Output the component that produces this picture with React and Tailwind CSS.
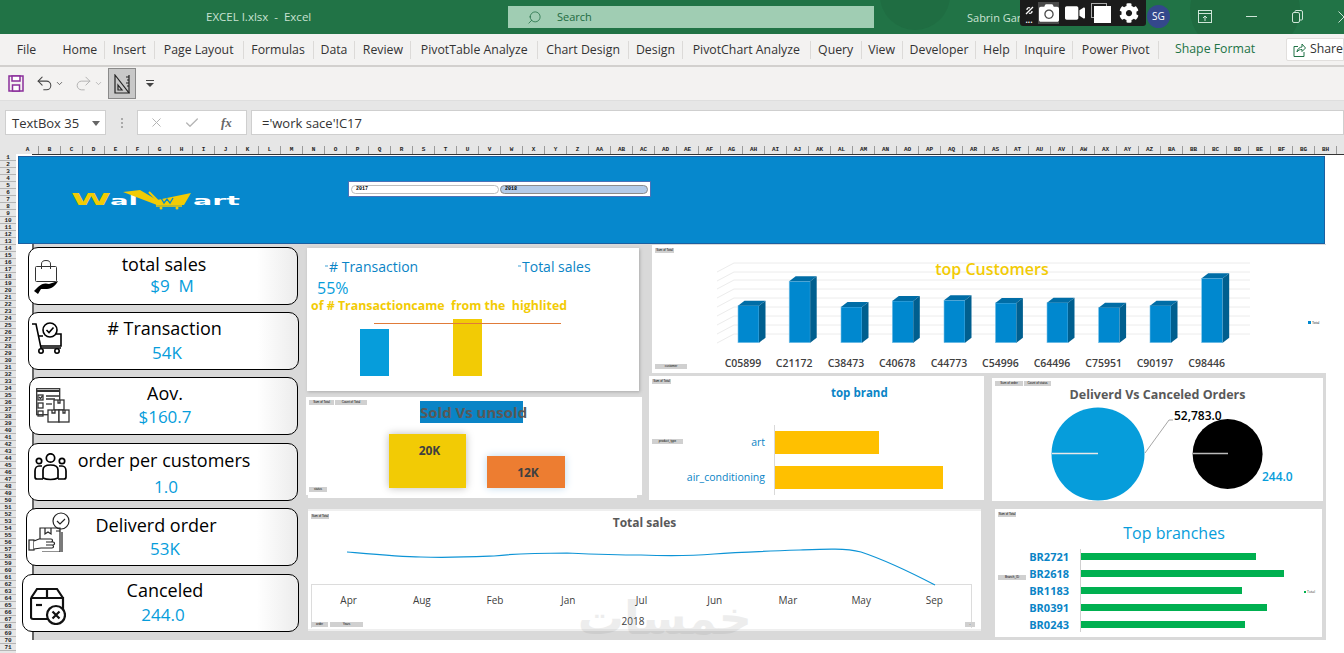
import { Search, Undo2, Redo2, ChevronDown, X, Check } from "lucide-react";
import { FaCamera, FaVideo, FaCog } from "react-icons/fa";

const tabs = [
  ["File", "w-[56px] pr-[3px]", ""],
  ["Home", "w-[49px]", "border-r"],
  ["Insert", "w-[50px]", "border-r"],
  ["Page Layout", "w-[89px]", "border-r"],
  ["Formulas", "w-[70px]", "border-r"],
  ["Data", "w-[42px]", "border-r"],
  ["Review", "w-[56px]", "border-r"],
  ["PivotTable Analyze", "w-[127px]", "border-r"],
  ["Chart Design", "w-[91px]", "border-r"],
  ["Design", "w-[54px]", "border-r"],
  ["PivotChart Analyze", "w-[128px]", "border-r"],
  ["Query", "w-[51px]", "border-r"],
  ["View", "w-[41px]", "border-r"],
  ["Developer", "w-[74px]", "border-r"],
  ["Help", "w-[41px]", "border-r"],
  ["Inquire", "w-[56px]", "border-r"],
  ["Power Pivot", "w-[86px]", "border-r"],
];

const letters = "ABCDEFGHIJKLMNOPQRSTUVWXYZ".split("");
const columns = [...letters, ...letters.map((l) => "A" + l), ...letters.slice(0, 8).map((l) => "B" + l)];
const rows = Array.from({ length: 71 }, (_, i) => i + 1);

const customers = [
  ["C05899", 738, 305.7],
  ["C21172", 789.2, 281.3],
  ["C38473", 841, 307],
  ["C40678", 892.3, 301],
  ["C44773", 944, 300.3],
  ["C54996", 995.4, 303],
  ["C64496", 1047, 302.7],
  ["C75951", 1098.6, 307.7],
  ["C90197", 1150, 305.7],
  ["C98446", 1201.7, 278.3],
];
const gridLines = [263, 272, 280, 289, 298, 307, 316, 325, 334];

const months = ["Apr", "Aug", "Feb", "Jan", "Jul", "Jun", "Mar", "May", "Sep"];

const branches = [
  ["BR2721", "w-[175px]"],
  ["BR2618", "w-[203px]"],
  ["BR1183", "w-[161px]"],
  ["BR0391", "w-[186px]"],
  ["BR0243", "w-[164px]"],
];

const openSans = "font-['Open_Sans',sans-serif]";

function BagIcon() {
  return (
    <svg width="24" height="34" viewBox="0 0 24 34" fill="none" stroke="#333" strokeWidth="1">
      <rect x="1.5" y="6.5" width="21" height="15" rx="1" />
      <path d="M7.5 9V4a4.5 3.5 0 0 1 9 0v5" />
      <path d="M0 31l4-4c4-4 8-4 11-3l3-1 6-2c-2 4-6 8-11 8H7l-3 5z" fill="#000" stroke="none" />
    </svg>
  );
}

function CartIcon() {
  return (
    <svg width="30" height="32" viewBox="0 0 30 32" fill="none" stroke="#000" strokeWidth="1.6">
      <path d="M0 2h4l5 24h20" />
      <path d="M7 14h4M24 12h5v12H9" />
      <circle cx="18" cy="8" r="7" />
      <path d="M14.5 8l2.5 2.5 4.5-5" />
      <circle cx="9" cy="29" r="2.2" />
      <circle cx="25" cy="29" r="2.2" />
    </svg>
  );
}

function StockIcon() {
  return (
    <svg width="34" height="35" viewBox="0 0 34 35" fill="none" stroke="#333" strokeWidth="1.3">
      <rect x="0.7" y="0.7" width="23" height="26" />
      <path d="M0.7 3h23" strokeWidth="2" />
      <rect x="2" y="7" width="5" height="5" />
      <path d="M3 9l1.5 1.5L6.5 8M10 8h13M10 11h9" />
      <rect x="2" y="15" width="5" height="5" />
      <path d="M10 16h6" />
      <rect x="2" y="23" width="5" height="5" />
      <rect x="18" y="12" width="10" height="10" fill="#fff" />
      <path d="M22 12v3h2v-3" />
      <rect x="12" y="22" width="11" height="12" fill="#fff" />
      <path d="M16 22v3h3v-3" />
      <rect x="23" y="22" width="10" height="12" fill="#fff" />
      <path d="M27 22v3h2v-3" />
    </svg>
  );
}

function PeopleIcon() {
  return (
    <svg width="33" height="28" viewBox="0 0 33 28" fill="none" stroke="#000" strokeWidth="1.7">
      <circle cx="5" cy="8" r="2.7" />
      <circle cx="16.5" cy="5" r="4.2" />
      <circle cx="28" cy="8" r="2.7" />
      <path d="M9 26H3a2 2 0 0 1-2-2v-6c0-3 2-5 4-5h3" />
      <path d="M24 26h6a2 2 0 0 0 2-2v-6c0-3-2-5-4-5h-3" />
      <path d="M9 25v-8c0-4 3-5 7.500-5s7.500 1 7.500 5v8c-4 2-11 2-15 0z" />
    </svg>
  );
}

function DeliverIcon() {
  return (
    <svg width="42" height="40" viewBox="0 0 42 40" fill="none" stroke="#222" strokeWidth="1.2">
      <circle cx="33" cy="9" r="8" />
      <path d="M29 9l3 3 5-5" />
      <path d="M12 27V16h20v24H14M32 19h-4M34 20v20" />
      <path d="M17 16v6l3-2 3 2v-6" />
      <rect x="1" y="28" width="5" height="10" />
      <path d="M6 29l5-2h12c2 0 2 3 0 3h-5 7c2 0 2 3 0 3h-7 6c2 0 2 3 0 3H13l-7 1" fill="#fff" />
    </svg>
  );
}

function CancelIcon() {
  return (
    <svg width="36" height="38" viewBox="0 0 36 38" fill="none" stroke="#111" strokeWidth="2.2">
      <path d="M1 11h32v12M1 11v19a2 2 0 0 0 2 2h19M1 11l6-9h20l6 9M17 2v9" />
      <path d="M6 18h6" />
      <circle cx="26" cy="28" r="9" fill="#fff" />
      <path d="M22.500 24.500l7 7M29.500 24.500l-7 7" />
    </svg>
  );
}

function KpiCard({ icon, title, value, outer, iconBox, text, valueBox }) {
  return (
    <div
      className={`flex h-[58px] rounded-[10px] border-[1.5px] border-black bg-linear-to-r from-white from-85% to-[#ececec] ${outer}`}
    >
      <div className={`shrink-0 ${iconBox}`}>{icon}</div>
      <div className={`flex-1 flex flex-col items-center text-black ${openSans} ${text}`}>
        <div className="text-[18px] leading-[22px] whitespace-pre">{title}</div>
        <div className={`text-[17px] leading-[22px] text-[#069ddb] whitespace-pre ${valueBox}`}>{value}</div>
      </div>
    </div>
  );
}

function FieldTag({ label, className }) {
  return (
    <div
      className={`absolute h-[5px] bg-[#d0d0d0] text-[3px] leading-[5px] text-black text-center overflow-hidden font-['Liberation_Sans',sans-serif] ${className}`}
    >
      {label}
    </div>
  );
}

function Logo() {
  return (
    <svg width="170" height="20" viewBox="71 190 170 20" className="block">
      <text x="71" y="205" fontFamily="DejaVu Sans" fontWeight="700" fontSize="16" fill="#f2cb05" textLength="40" lengthAdjust="spacingAndGlyphs">
        W
      </text>
      <text x="110" y="205" fontFamily="DejaVu Sans" fontWeight="700" fontSize="13" fill="#fff" textLength="28" lengthAdjust="spacingAndGlyphs">
        al
      </text>
      <path d="M123 192l17-2 17 10 34-7-7 12h-27z" fill="#f2cb05" />
      <path d="M149 192l8 8 0 5" fill="none" stroke="#f2cb05" strokeWidth="2" />
      <path d="M161 198l3 5 3-4 3 4 3-5" fill="none" stroke="#0688cd" strokeWidth="1.300" />
      <path d="M156 206h26" stroke="#f2cb05" strokeWidth="1.500" />
      <circle cx="161" cy="208" r="1.500" fill="#f2cb05" />
      <circle cx="177" cy="208" r="1.500" fill="#f2cb05" />
      <text x="193" y="205" fontFamily="DejaVu Sans" fontWeight="700" fontSize="13" fill="#fff" textLength="47" lengthAdjust="spacingAndGlyphs">
        art
      </text>
    </svg>
  );
}

function CustomersChart() {
  return (
    <svg width="676" height="128" viewBox="652 245 676 128" className="block">
      {gridLines.map((y) => (
        <g key={y} stroke="#ececec" strokeWidth="1">
          <line x1="734" y1={y} x2="1250" y2={y} />
          <line x1="734" y1={y} x2="717" y2={y + 9} />
        </g>
      ))}
      {customers.map(([name, x, top]) => (
        <g key={name}>
          <rect x={x} y={top} width="21" height={342.7 - top} fill="#0088cf" stroke="#7cc4ea" strokeWidth="0.6" />
          <polygon points={`${x},${top} ${x + 6.5},${top - 5} ${x + 27.5},${top - 5} ${x + 21},${top}`} fill="#006da6" />
          <polygon
            points={`${x + 21},${top} ${x + 27.5},${top - 5} ${x + 27.5},${337.7} ${x + 21},${342.7}`}
            fill="#005f8f"
          />
          <text x={x + 5} y="367" textAnchor="middle" fontFamily="Open Sans" fontWeight="600" fontSize="10.500" fill="#404040">
            {name}
          </text>
        </g>
      ))}
      <text x="992" y="275" textAnchor="middle" fontFamily="Open Sans" fontWeight="600" fontSize="16" fill="#f2cb05">
        top Customers
      </text>
      <rect x="1308" y="321" width="3" height="3" fill="#0088cf" />
      <text x="1312" y="324" fontFamily="Liberation Sans" fontSize="3.500" fill="#333">
        Total
      </text>
    </svg>
  );
}

function DeliveryChart() {
  return (
    <svg width="331" height="92" viewBox="992 409 331 92" className="block overflow-visible">
      <circle cx="1098" cy="454" r="46.500" fill="#069ddb" />
      <line x1="1052" y1="453.500" x2="1098" y2="453.500" stroke="#e8e8e8" strokeWidth="1.500" />
      <circle cx="1227.600" cy="454" r="35" fill="#000" />
      <line x1="1193" y1="453.500" x2="1228" y2="453.500" stroke="#bbb" strokeWidth="1.500" />
      <polyline points="1145,453 1169,420 1173,420" fill="none" stroke="#a6a6a6" />
      <text x="1174" y="420" fontFamily="Open Sans" fontWeight="600" fontSize="12" fill="#000">
        52,783.0
      </text>
      <text x="1262" y="481" fontFamily="Open Sans" fontWeight="600" fontSize="12" fill="#069ddb">
        244.0
      </text>
    </svg>
  );
}

function SalesLine() {
  return (
    <svg width="673" height="42" viewBox="308 544 673 42" className="block">
      <path
        d="M347 552C380 555 400 557 421 557C450 558 470 557 494 556C520 553 540 553 567 553C590 554 620 555 641 555C665 556 690 556 714 554C740 552 770 551 800 550C825 549 845 548 861 552C885 560 910 572 935 585"
        fill="none"
        stroke="#0d94d6"
        strokeWidth="1.200"
      />
    </svg>
  );
}

export default function App() {
  return (
    <div className={`w-[1344px] h-[653px] overflow-hidden relative bg-white ${openSans}`}>
      {/* title bar */}
      <div className="h-[34px] bg-[#217346] flex items-center text-[#c9e2d3] text-[11px] relative overflow-hidden">
        <div className="w-[206px]" />
        <div className="w-[302px] text-[11.500px]">EXCEL I.xlsx&nbsp; -&nbsp; Excel</div>
        <div className="w-[366px] h-[22px] bg-[#a0cdb3] flex items-center text-[#1d6b41] mb-[1px] pt-[1px]">
          <Search size={15} strokeWidth={1.2} className="ml-[19px] mr-[15px] scale-x-[-1]" />
          <span>Search</span>
        </div>
        <div className="w-[93px] ml-[93px] mt-[2px]">Sabrin Gar</div>
        <div className="absolute left-[880px] top-[-40px] w-[70px] h-[70px] rounded-full bg-[#1f6d42]" />
        <div className="absolute left-[1190px] top-[-30px] w-[110px] h-[80px] rounded-full bg-[#1f6b40]" />
        <div className="absolute left-[1147px] top-[5px] w-[23px] h-[23px] rounded-full bg-[#34488c] text-white text-[10px] leading-[23px] text-center">
          SG
        </div>
        <svg className="absolute left-[1198px] top-[10px]" width="14" height="13" viewBox="0 0 14 13" fill="none" stroke="#cfe5d8">
          <rect x="0.500" y="0.500" width="13" height="12" />
          <path d="M0.500 3.500h13M7 11V6M5 8l2-2 2 2" />
        </svg>
        <div className="absolute left-[1246px] top-[16px] w-[11px] h-[1px] bg-[#cfe5d8]" />
        <svg className="absolute left-[1292px] top-[10px]" width="11" height="13" viewBox="0 0 11 13" fill="none" stroke="#cfe5d8">
          <rect x="0.500" y="2.500" width="7" height="10" rx="1.500" />
          <path d="M3 2.500V1.500a1 1 0 0 1 1-1h5a1.500 1.500 0 0 1 1.500 1.500v7a1 1 0 0 1-1 1h-1.500" />
        </svg>
        <svg className="absolute left-[1338px] top-[11px]" width="6" height="12" viewBox="0 0 6 12" fill="none" stroke="#cfe5d8">
          <path d="M0.500 0.500l5.500 5.500-5.500 5.500" />
        </svg>
      </div>

      {/* capture toolbar floating on the title bar */}
      <div className="absolute left-[1020px] top-0 w-[126px] h-[26px] bg-[#1b1b1b] rounded-b-[3px] flex items-center text-white">
        <div className="w-[18px] flex flex-col items-center gap-[3px]">
          <svg width="9" height="9" viewBox="0 0 9 9" fill="none" stroke="#fff" strokeWidth="1.300">
            <path d="M1 8l7-7M2 4a2 2 0 0 1 3-2M7 5a2 2 0 0 1-3 2" />
          </svg>
          <div className="text-[8px] leading-[3px] font-bold">...</div>
        </div>
        <div className="w-[21px] h-[22px] bg-[#4a4a4a] flex items-center justify-center">
          <FaCamera size={20} />
        </div>
        <FaVideo size={20} className="ml-[6px]" />
        <div className="ml-[6px] w-[21px] h-[20px] relative">
          <div className="w-[16px] h-[15px] border border-[#aaa]" />
          <div className="absolute left-[3px] top-[3px] w-[17px] h-[17px] bg-white" />
        </div>
        <FaCog size={20} className="ml-[7px]" />
      </div>

      {/* ribbon tabs */}
      <div className="h-[31px] bg-[#f3f2f1] flex items-center text-[12.300px] text-[#333]">
        {tabs.map(([label, width, border]) => (
          <div
            key={label}
            className={`h-[18px] leading-[18px] text-center whitespace-nowrap border-[#dcdad8] ${width} ${border}`}
          >
            {label}
          </div>
        ))}
        <div className="w-[112px] text-center text-[#217346]">Shape Format</div>
        <div className="ml-[15px] h-[23px] flex-1 bg-white border border-[#e1dfdd] rounded-l-[2px] flex items-center pl-[6px] text-[#333]">
          <svg width="13" height="14" viewBox="0 0 13 14" fill="none" stroke="#217346" className="mr-[4px]">
            <path d="M5 3.500H1v10h10V9M4 9c0-3 3-5 5-5V1l3.500 4L9 8.500V6.500C7 6.500 5 7 4 9z" />
          </svg>
          Share
        </div>
      </div>
      <div className="h-[2px] bg-[#d2d0ce]" />

      {/* quick access */}
      <div className="h-[33px] bg-[#f3f2f1] flex items-center text-[#666]">
        <svg width="16" height="17" viewBox="0 0 16 17" className="ml-[8px]" fill="#f3f2f1" stroke="#8b2f9b" strokeWidth="1.500">
          <path d="M1 1h14v15H1z" />
          <rect x="4" y="1" width="8" height="5" fill="#fff" />
          <rect x="4.500" y="10" width="7" height="6" fill="#fff" />
        </svg>
        <Undo2 size={19} strokeWidth={1.3} className="ml-[11px] text-[#444]" />
        <ChevronDown size={9} className="ml-[1px] text-[#444]" />
        <Redo2 size={19} strokeWidth={1.1} className="ml-[10px] text-[#aaa]" />
        <ChevronDown size={9} className="ml-[1px] text-[#aaa]" />
        <div className="ml-[5px] w-[28px] h-[31px] bg-[#c8c8c8] border border-[#8a8a8a] flex items-center justify-center">
          <svg width="16" height="20" viewBox="0 0 16 20" fill="none" stroke="#222" strokeWidth="1.200">
            <path d="M1 1l14 18H1z" />
            <path d="M4 11l4 5H4z" />
            <path d="M15 1v18M12 3h3M13 6h2M12 9h3M13 12h2" />
          </svg>
        </div>
        <svg width="8" height="8" viewBox="0 0 8 8" className="ml-[10px]" fill="#444">
          <rect x="0" y="0" width="8" height="1" />
          <path d="M0 3h8L4 7z" />
        </svg>
      </div>

      {/* formula bar */}
      <div className="h-[46px] bg-[#e6e6e6] border-t border-[#dedede] pt-[9px] pl-[5px] flex items-start text-[13px] text-[#333]">
        <div className="w-[101px] h-[25px] bg-white border border-[#cfcfcf] flex items-center pl-[6px] pt-[2px] justify-between pr-[5px]">
          TextBox 35
          <svg width="8" height="5" viewBox="0 0 8 5" fill="#666">
            <path d="M0 0h8L4 5z" />
          </svg>
        </div>
        <div className="w-[31px] h-[25px] flex flex-col items-center justify-center gap-[2px]">
          <div className="w-[2px] h-[2px] bg-[#aaa]" />
          <div className="w-[2px] h-[2px] bg-[#aaa]" />
          <div className="w-[2px] h-[2px] bg-[#aaa]" />
        </div>
        <div className="w-[110px] h-[25px] bg-white border border-[#cfcfcf] flex items-center">
          <X size={15} className="ml-[11px] text-[#b5b5b5]" strokeWidth={1.6} />
          <Check size={16} className="ml-[20px] text-[#b5b5b5]" strokeWidth={2} />
          <span className="ml-[21px] italic font-['Liberation_Serif',serif] font-bold text-[13px] text-[#666]">fx</span>
        </div>
        <div className="ml-[4px] flex-1 h-[25px] bg-white border border-[#cfcfcf] flex items-center pl-[10px] pt-[2px]">
          ='work sace'!C17
        </div>
      </div>

      {/* column headers */}
      <div className="h-[8px] bg-[#e6e6e6] flex pl-[17px] font-['Liberation_Mono',monospace] font-bold text-[6px] leading-[8px] text-[#222]">
        {columns.map((c) => (
          <div key={c} className="w-[22px] shrink-0 text-center border-r border-[#9a9a9a]">
            {c}
          </div>
        ))}
      </div>

      <div className="flex h-[499px] overflow-hidden">
        {/* row headers */}
        <div className="w-[16px] shrink-0 bg-[#e6e6e6] font-['Liberation_Mono',monospace] font-bold text-[6px] leading-[7px] text-[#222]">
          {rows.map((r) => (
            <div key={r} className="h-[7px] text-center border-b border-[#b5b5b5]">
              {r}
            </div>
          ))}
        </div>

        <div className="flex-1 min-w-0">
          <div className="ml-[16px] h-[1px] bg-[#333]" />
          <div className="h-[1px]" />
          {/* banner */}
          <div className="ml-[2px] w-[1307px] h-[88px] bg-[#0688cd] border border-[#1b5fa0] flex items-start">
            <div className="ml-[52px] mt-[33px]">
              <Logo />
            </div>
            <div className="ml-[107px] mt-[24px] w-[303px] h-[16px] bg-white border border-[#4a72b8] flex items-center gap-[1px] px-[2px] font-['Liberation_Mono',monospace] font-bold text-[5px] text-black">
              <div className="flex-1 h-[9px] rounded-full border border-[#bdbdbd] bg-white pl-[4px] leading-[7px]">2017</div>
              <div className="flex-1 h-[9px] rounded-full border border-[#8c8c8c] bg-[#b4cbe8] pl-[4px] leading-[7px]">2018</div>
            </div>
          </div>

          {/* dashboard body */}
          <div className="ml-[16px] w-[1294px] h-[396px] bg-[#d9d9d9] border-l-2 border-[#666] flex">
            {/* kpi column */}
            <div className="w-[266px] shrink-0 -ml-[2px] pt-[3px] flex flex-col">
              <KpiCard
                icon={<BagIcon />}
                title="total sales"
                value="$9  M"
                outer="-ml-[4px] w-[270px]"
                iconBox="ml-[5px] mt-[12px]"
                text="-ml-[27px] pt-[5px]"
                valueBox="ml-[16px]"
              />
              <KpiCard
                icon={<CartIcon />}
                title="# Transaction"
                value="54K"
                outer="mt-[7px] -ml-[4px] w-[271px]"
                iconBox="ml-[3px] mt-[9px]"
                text="-ml-[31px] pt-[4px]"
                valueBox="mt-[3px] ml-[5px]"
              />
              <KpiCard
                icon={<StockIcon />}
                title="Aov."
                value="$160.7"
                outer="mt-[7px] -ml-[3px] w-[269px]"
                iconBox="ml-[6px] mt-[10px]"
                text="-ml-[37px] pt-[4px]"
                valueBox="mt-[2px]"
              />
              <KpiCard
                icon={<PeopleIcon />}
                title="order per customers"
                value="1.0"
                outer="mt-[8px] -ml-[4px] w-[270px]"
                iconBox="ml-[5px] mt-[9px]"
                text="-ml-[36px] pt-[5px]"
                valueBox="mt-[5px] ml-[4px]"
              />
              <KpiCard
                icon={<DeliverIcon />}
                title="Deliverd order"
                value="53K"
                outer="mt-[7px] -ml-[6px] w-[272px]"
                iconBox="ml-[1px] mt-[3px]"
                text="-ml-[55px] pt-[5px]"
                valueBox="mt-[2px] ml-[18px]"
              />
              <KpiCard
                icon={<CancelIcon />}
                title="Canceled"
                value="244.0"
                outer="mt-[8px] -ml-[10px] w-[277px]"
                iconBox="ml-[7px] mt-[12px]"
                text="-ml-[34px] pt-[4px]"
                valueBox="mt-[3px] -ml-[4px]"
              />
            </div>

            <div className="flex-1 min-w-0">
              <div className="flex h-[262px]">
                {/* transaction + sold */}
                <div className="w-[347px] shrink-0">
                  <div className="ml-[9px] mt-[4px] w-[332px] h-[143px] bg-white shadow-[1px_1px_3px_#aaa] pt-[9px] relative">
                    <div className="flex text-[14px] leading-[20px] text-[#0a84c6]">
                      <span className="ml-[18px] w-[193px] flex items-center gap-[1px]">
                        <span className="w-[3px] h-[2px] bg-[#9fd0ea] mt-[-2px]" /># Transaction
                      </span>
                      <span className="flex items-center gap-[1px]">
                        <span className="w-[3px] h-[2px] bg-[#9fd0ea] mt-[-2px]" />Total sales
                      </span>
                    </div>
                    <div className="ml-[10px] mt-[1px] text-[16px] leading-[20px] text-[#069ddb]">55%</div>
                    <div className="ml-[4px] -mt-[1px] text-[12.400px] leading-[17px] font-bold text-[#f2cb05] whitespace-pre">
                      of # Transactioncame  from the  highlited
                    </div>
                    <div className="ml-[67px] w-[187px] h-[1px] bg-[#e07b39] absolute top-[75px] z-10" />
                    <div className="flex items-end h-[57px] mt-[5px]">
                      <div className="ml-[53px] w-[29px] h-[47px] bg-[#069ddb]" />
                      <div className="ml-[64px] w-[29px] h-[57px] bg-[#f2cb05]" />
                    </div>
                  </div>
                  <div className="ml-[8px] mt-[6px] w-[336px] h-[98px] bg-white relative pt-[4px]">
                    <FieldTag label="Sum of Total" className="left-[3px] top-[3px] w-[25px]" />
                    <FieldTag label="Count of Total" className="left-[29px] top-[3px] w-[32px]" />
                    <FieldTag label="status" className="left-[3px] top-[90px] w-[18px]" />
                    <div className="ml-[114px] w-[103px] h-[22px] bg-[#0a84c6] text-center text-[#595959] text-[15px] leading-[22px] font-bold whitespace-nowrap">
                      Sold Vs unsold
                    </div>
                    <div className="flex items-end h-[54px] mt-[11px]">
                      <div className="ml-[83px] w-[77px] h-[54px] pl-[4px] bg-[#f2cb05] shadow-[0_0_8px_#bbb] text-center text-[12px] leading-[34px] font-bold text-[#404040]">
                        20K
                      </div>
                      <div className="ml-[21px] w-[78px] h-[32px] pl-[4px] bg-[#ed7d31] shadow-[0_0_8px_#bcd8ec] text-center text-[12px] leading-[34px] font-bold text-[#404040]">
                        12K
                      </div>
                    </div>
                  </div>
                  <div className="ml-[10px] w-[329px] h-[3px] bg-white" />
                </div>

                {/* customers + brand + delivery */}
                <div className="flex-1 min-w-0">
                  <div className="ml-[7px] mt-[1px] w-[676px] h-[128px] bg-white relative">
                    <CustomersChart />
                    <FieldTag label="Sum of Total" className="left-[3px] top-[3px] w-[19px]" />
                    <FieldTag label="customer" className="left-[3px] top-[119px] w-[32px]" />
                  </div>
                  <div className="flex items-start mt-[3px] ml-[4px]">
                    <div className="w-[335px] h-[124px] bg-white relative text-[10.500px] text-[#0a84c6]">
                      <FieldTag label="Sum of Total" className="left-[3px] top-[3px] w-[19px]" />
                      <FieldTag label="product_type" className="left-[3px] top-[63px] w-[31px]" />
                      <div className="h-[49px] pt-[8px] pl-[182px] text-[11.500px] leading-[18px] font-bold">top brand</div>
                      <div className="flex">
                        <div className="w-[116px] flex flex-col gap-[12px] py-[6px] text-right">
                          <div className="h-[23px] leading-[23px]">art</div>
                          <div className="h-[23px] leading-[23px] whitespace-nowrap">air_conditioning</div>
                        </div>
                        <div className="ml-[9px] h-[70px] border-l border-[#d9d9d9] flex flex-col gap-[12px] py-[6px]">
                          <div className="w-[104px] h-[23px] bg-[#ffc000]" />
                          <div className="w-[168px] h-[23px] bg-[#ffc000]" />
                        </div>
                      </div>
                    </div>
                    <div className="ml-[8px] mt-[2px] w-[331px] h-[123px] bg-white relative">
                      <FieldTag label="Sum of order" className="left-[3px] top-[3px] w-[28px]" />
                      <FieldTag label="Count of status" className="left-[32px] top-[3px] w-[27px]" />
                      <div className="h-[31px] pt-[8px] text-center text-[12.500px] leading-[18px] font-bold text-[#595959]">
                        Deliverd Vs Canceled Orders
                      </div>
                      <DeliveryChart />
                    </div>
                  </div>
                </div>
              </div>

              {/* lower row */}
              <div className="flex items-start mt-[3px]">
                <div className="ml-[10px] w-[673px] h-[122px] bg-white border-t-2 border-b-2 border-[#efefef] relative">
                  <FieldTag label="Sum of Total" className="left-[3px] top-[3px] w-[18px]" />
                  <div className="h-[33px] pt-[3px] text-center text-[12px] leading-[17px] font-bold text-[#595959]">Total sales</div>
                  <SalesLine />
                  <div className="ml-[3px] w-[661px] h-[44px] border border-b-0 border-[#dcdcdc] -mt-[2px]">
                    <div className="grid grid-cols-9 mt-[7px] text-[10px] leading-[16px] text-[#404040] text-center">
                      {months.map((m) => (
                        <div key={m}>{m}</div>
                      ))}
                    </div>
                    <div className="text-center text-[10px] leading-[14px] text-[#404040] mt-[6px] pr-[17px]">2018</div>
                  </div>
                  <FieldTag label="order" className="left-[3px] top-[111px] w-[17px]" />
                  <FieldTag label="Years" className="left-[22px] top-[111px] w-[33px]" />
                  <FieldTag label="-" className="left-[657px] top-[111px] w-[10px]" />
                </div>
                <div className="ml-[14px] w-[327px] h-[128px] bg-white relative pt-[11px]">
                  <FieldTag label="Sum of Total" className="left-[3px] top-[3px] w-[18px]" />
                  <FieldTag label="Branch_ID" className="left-[3px] top-[66px] w-[28px]" />
                  <div className="text-center text-[16px] leading-[26px] text-[#069ddb] pl-[31px]">Top branches</div>
                  <div className="flex mt-[3px] text-[11px] leading-[7px] font-bold text-[#0a84c6]">
                    <div className="w-[74px] shrink-0 pt-[4px] flex flex-col gap-[10px] text-right">
                      {branches.map(([name]) => (
                        <div key={name} className="h-[7px]">
                          {name}
                        </div>
                      ))}
                    </div>
                    <div className="ml-[11px] pt-[4px] h-[83px] border-l border-[#d0d0d0] flex flex-col gap-[10px]">
                      {branches.map(([name, width]) => (
                        <div key={name} className={`h-[7px] bg-[#00b050] ${width}`} />
                      ))}
                    </div>
                  </div>
                  <div className="absolute left-[309px] top-[80px] flex items-center gap-[1px] text-[3.500px] text-[#333]">
                    <div className="w-[2px] h-[2px] bg-[#00b050]" />
                    Total
                  </div>
                </div>
              </div>
            </div>
          </div>
        </div>
      </div>

      {/* site watermark over the sheet */}
      <div
        dir="rtl"
        className="absolute left-[590px] top-[592px] w-[162px] text-center text-[46px] leading-[52px] font-['DejaVu_Sans',sans-serif] font-bold text-[#888] opacity-[0.14] pointer-events-none"
      >
        خمسات
      </div>
    </div>
  );
}
